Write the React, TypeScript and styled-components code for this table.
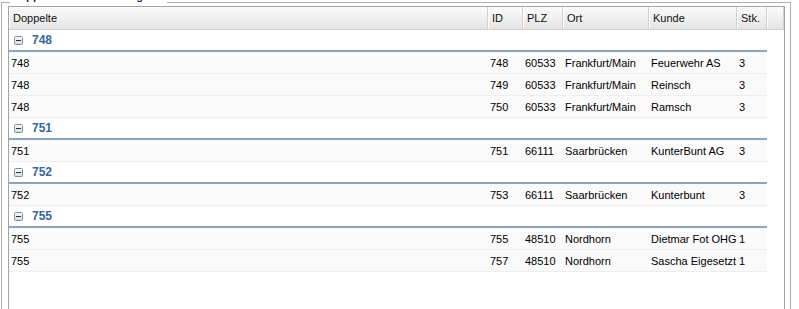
import styled, { createGlobalStyle } from "styled-components";

const GlobalStyle = createGlobalStyle`
  html, body {
    margin: 0;
    padding: 0;
    background: #fff;
    overflow: hidden;
  }
  body {
    font-family: "Liberation Sans", Arial, sans-serif;
    font-size: 11px;
    color: #000;
  }
`;

const COLS = "479px 35px 40px 86px 88px 30px";

const Page = styled.div`
  padding-left: 1px;
  padding-top: 2px;
`;

const Frame = styled.div`
  position: relative;
  width: 790px;
  box-sizing: border-box;
  border: 1px solid #b0b0b0;
  padding: 3px 5px 0 6px;
`;

const Legend = styled.div`
  position: absolute;
  top: -13px;
  left: 8px;
  width: 157px;
  box-sizing: border-box;
  padding-left: 1px;
  background: #fff;
  font-weight: bold;
  font-size: 11px;
  line-height: 13px;
  letter-spacing: 0.2px;
  color: #1a2a44;
  white-space: nowrap;
  overflow: hidden;
`;

const Grid = styled.div`
  border: 1px solid #a3a3a3;
  min-height: 340px;
  background: #fff;
`;

const Header = styled.div`
  display: grid;
  grid-template-columns: ${COLS} 1fr;
  height: 23px;
  box-sizing: border-box;
  border-bottom: 1px solid #d0d0d0;
  background: linear-gradient(#fbfbfb, #e4e4e4);
`;

const HeadCell = styled.div`
  display: flex;
  align-items: center;
  padding-left: 4px;
  border-right: 1px solid #d0d0d0;
  box-shadow: inset 1px 0 0 #fff;
  color: #111;
  white-space: nowrap;
  overflow: hidden;
`;

const Body = styled.div`
  width: 758px;
`;

const GroupHead = styled.div`
  display: flex;
  align-items: center;
  gap: 9px;
  height: 22px;
  box-sizing: border-box;
  padding-left: 5px;
  border-bottom: 2px solid #8ea3c0;
  background: #fff;
  color: #3764a0;
  font-weight: bold;
  font-size: 12px;
`;

const Row = styled.div`
  display: grid;
  grid-template-columns: ${COLS};
  height: 22px;
  box-sizing: border-box;
  border-bottom: 1px solid #ededed;
  background: #fafafa;
`;

const Cell = styled.div`
  display: flex;
  align-items: center;
  padding-left: 2px;
  white-space: nowrap;
  overflow: hidden;
`;

const Toggle = () => (
  <svg width="9" height="9" viewBox="0 0 9 9">
    <defs>
      <linearGradient id="tg" x1="0" y1="0" x2="0" y2="1">
        <stop offset="0" stopColor="#ffffff" />
        <stop offset="1" stopColor="#d4dae4" />
      </linearGradient>
    </defs>
    <rect x="0.5" y="0.5" width="8" height="8" rx="1" fill="url(#tg)" stroke="#7d8ca3" />
    <rect x="2" y="4" width="5" height="1" fill="#333" />
  </svg>
);

const headers = ["Doppelte", "ID", "PLZ", "Ort", "Kunde", "Stk."];

const groups: { key: string; rows: string[][] }[] = [
  {
    key: "748",
    rows: [
      ["748", "748", "60533", "Frankfurt/Main", "Feuerwehr AS", "3"],
      ["748", "749", "60533", "Frankfurt/Main", "Reinsch", "3"],
      ["748", "750", "60533", "Frankfurt/Main", "Ramsch", "3"],
    ],
  },
  {
    key: "751",
    rows: [["751", "751", "66111", "Saarbrücken", "KunterBunt AG", "3"]],
  },
  {
    key: "752",
    rows: [["752", "753", "66111", "Saarbrücken", "Kunterbunt", "3"]],
  },
  {
    key: "755",
    rows: [
      ["755", "755", "48510", "Nordhorn", "Dietmar Fot OHG", "1"],
      ["755", "757", "48510", "Nordhorn", "Sascha Eigesetzt", "1"],
    ],
  },
];

export default function App() {
  return (
    <>
      <GlobalStyle />
      <Page>
        <Frame>
          <Legend>Doppelte Kundeneinträge</Legend>
          <Grid>
            <Header>
              {headers.map((h) => (
                <HeadCell key={h}>{h}</HeadCell>
              ))}
              <HeadCell />
            </Header>
            <Body>
              {groups.map((g) => (
                <div key={g.key}>
                  <GroupHead>
                    <Toggle />
                    {g.key}
                  </GroupHead>
                  {g.rows.map((r, i) => (
                    <Row key={i}>
                      {r.map((c, j) => (
                        <Cell key={j}>{c}</Cell>
                      ))}
                    </Row>
                  ))}
                </div>
              ))}
            </Body>
          </Grid>
        </Frame>
      </Page>
    </>
  );
}
